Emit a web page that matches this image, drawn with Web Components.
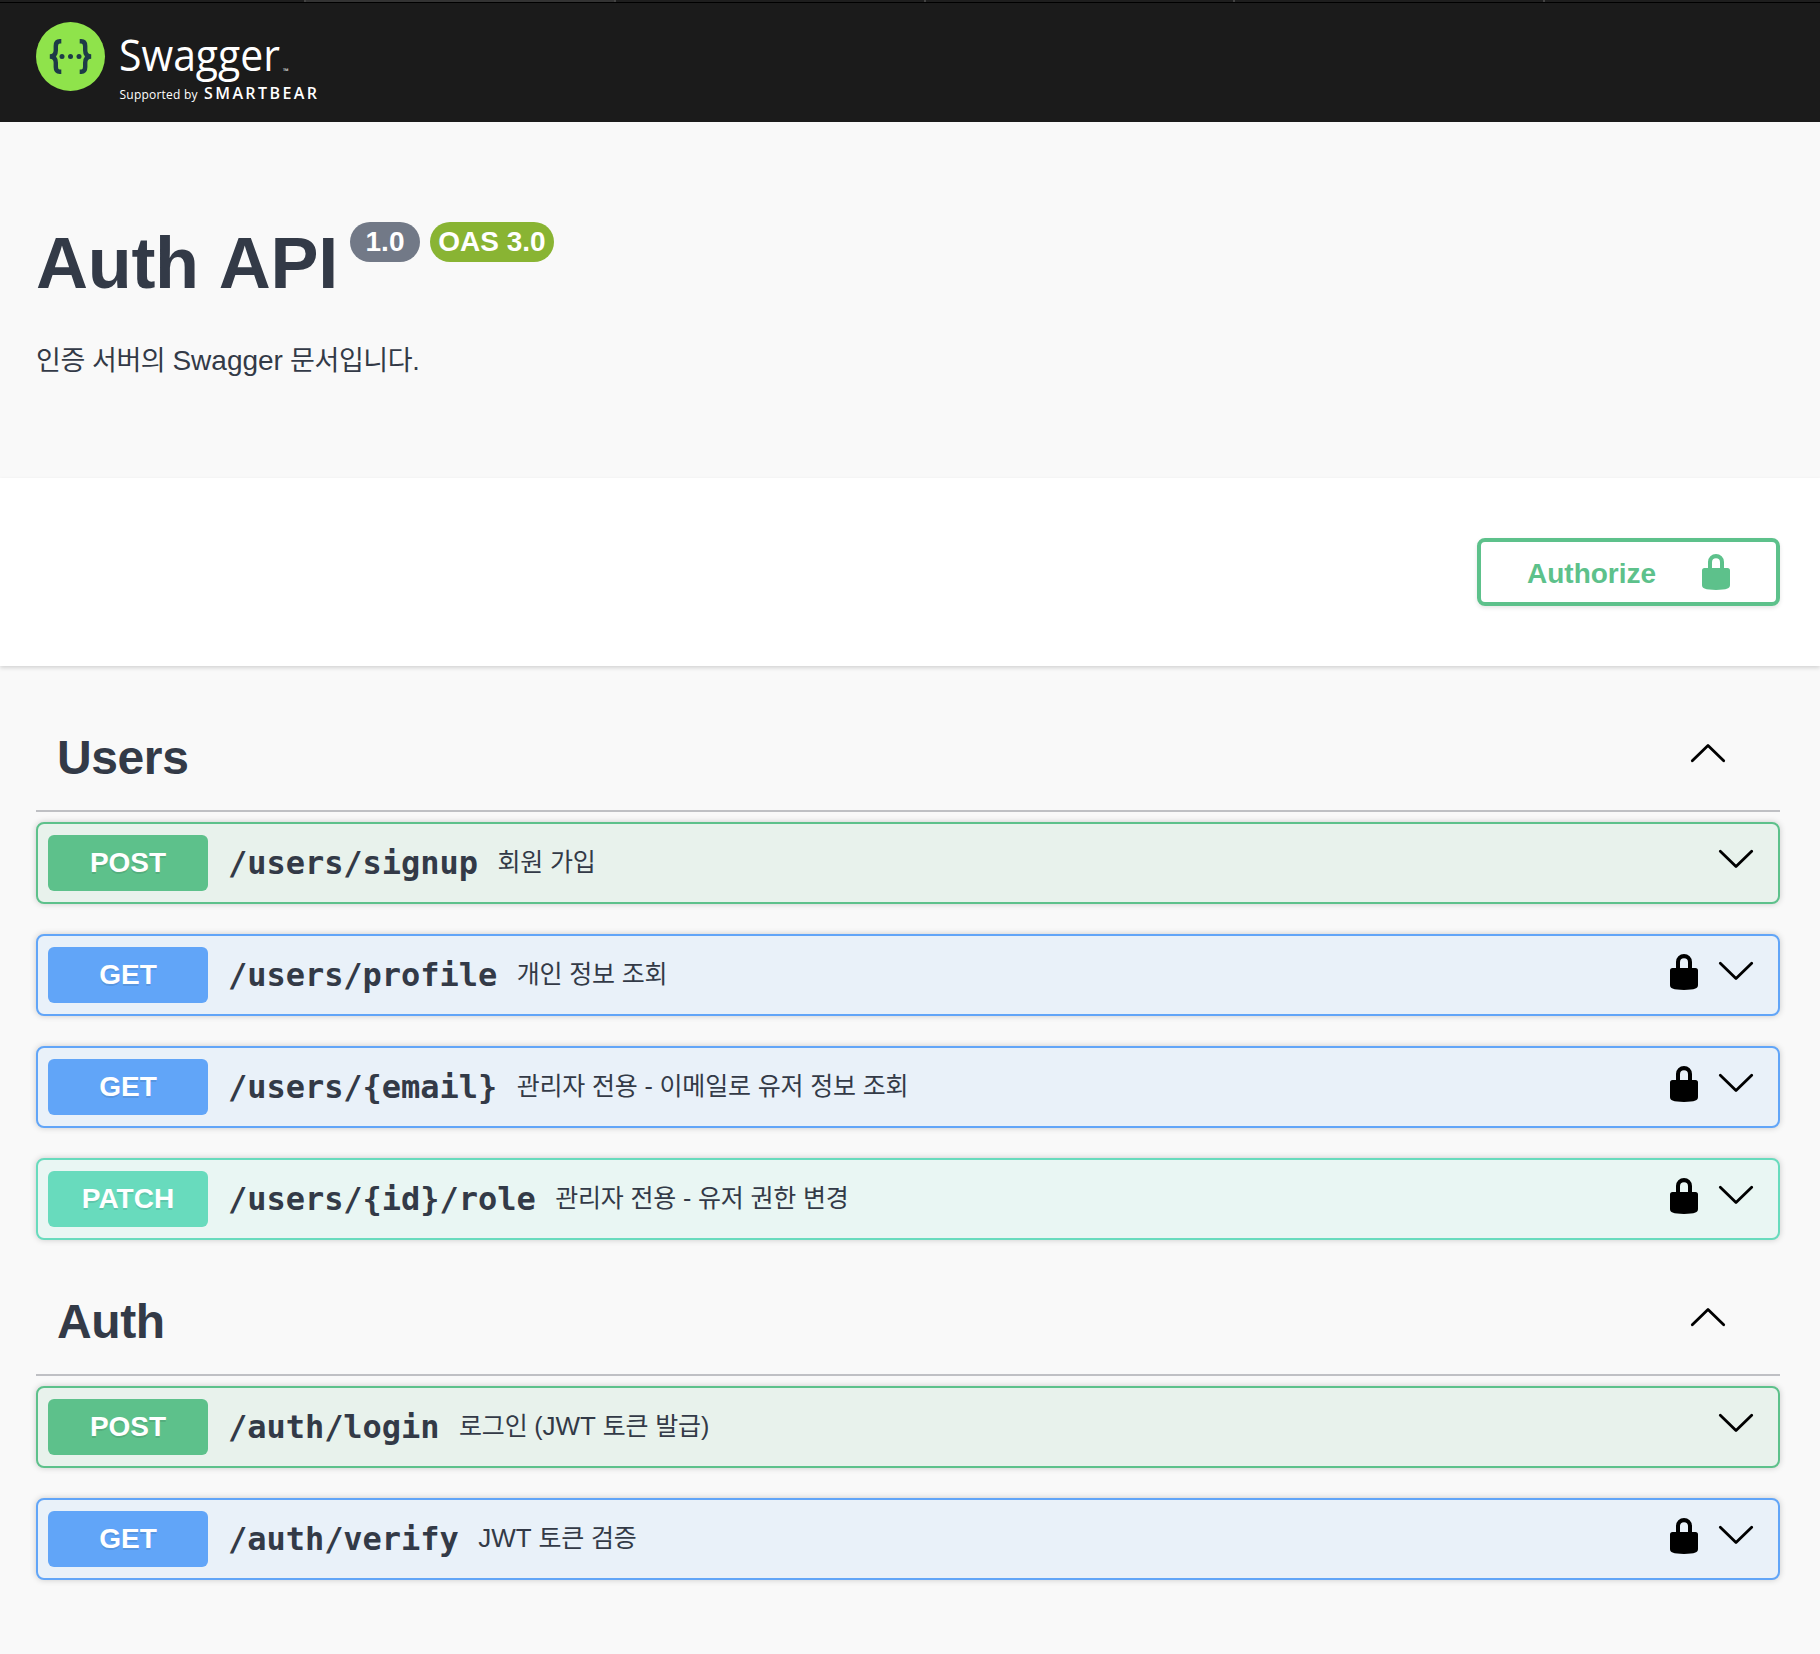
<!DOCTYPE html>
<html lang="ko">
<head>
<meta charset="utf-8">
<title>Auth API</title>
<style>
body{margin:0;background:#f9f9f9;color:#333a47;font-family:"Liberation Sans","Noto Sans CJK KR",sans-serif}
</style>
</head>
<body>
<swagger-app></swagger-app>
<script>
const define = (name, html) => {
  const t = document.createElement('template');
  t.innerHTML = html;
  customElements.define(name, class extends HTMLElement {
    constructor(){
      super();
      this.attachShadow({mode:'open'}).appendChild(t.content.cloneNode(true));
    }
  });
};

define('icon-lock', `<style>:host{display:block;width:28px;height:36px}svg{display:block}</style>
<svg width="28" height="36" viewBox="0 0 28 36" fill="currentColor"><path d="M6 14V8a8 8 0 0 1 16 0v6h3.500a2.500 2.500 0 0 1 2.500 2.500V31c0 1.600-.9 3-2.600 3.600C23 35.600 19 36 14 36S5 35.600 2.600 34.600C.9 34 0 32.600 0 31V16.500A2.500 2.500 0 0 1 2.500 14zM10 14h8V8.200a4 4 0 0 0-8 0z"/></svg>`);

define('icon-chevron', `<style>:host{display:block;width:36px;height:20px;color:#000}:host([up]) svg{transform:scaleY(-1)}svg{display:block}</style>
<svg width="36" height="20" viewBox="0 0 36 20" fill="none" stroke="currentColor" stroke-width="2.800" stroke-linecap="round" stroke-linejoin="round"><path d="M2.300 2.300 18 17.600 33.700 2.300"/></svg>`);

define('top-bar', `<style>
:host{display:block;height:122px;background:#1b1b1b}
.tabs{height:2px;display:flex;background:#1e1e1e;border-bottom:1px solid #000}
.tabs i{box-sizing:border-box;height:2px;flex:0 0 309.500px;border-left:2px solid #444}
.tabs i:first-child{flex-basis:304px;border:0}
.tabs i.on{background:#333;flex-basis:310px}
.tabs i:last-child{flex:1}
svg{display:block;margin:0 0 0 36px}
</style>
<div class="tabs"><i></i><i class="on"></i><i></i><i></i><i></i><i></i></div>
<svg width="300" height="119" viewBox="36 3 300 119" fill="#fff">
<circle cx="70.500" cy="56.500" r="34.500" fill="#8fe34b"/>
<g fill="none" stroke="#1d3b47" stroke-width="4.400">
<path d="M61.300 41.200h-1.500c-3 0-4 1.700-4 4.700v4.300c0 4-1.500 6.300-6 6.300 4.500 0 6 2.300 6 6.300v4.300c0 3 1 4.700 4 4.700h1.500"/>
<path d="M79.700 41.200h1.500c3 0 4 1.700 4 4.700v4.300c0 4 1.500 6.300 6 6.300-4.500 0-6 2.300-6 6.300v4.300c0 3-1 4.700-4 4.700h-1.500"/>
</g>
<g fill="#1d3b47"><circle cx="62" cy="56.500" r="2.500"/><circle cx="70.500" cy="56.500" r="2.500"/><circle cx="79" cy="56.500" r="2.500"/></g>
<g font-family="Open Sans">
<text x="119" y="70.500" font-size="43" textLength="161" lengthAdjust="spacingAndGlyphs">Swagger</text>
<text x="283" y="73.500" font-size="7.500">™</text>
<text x="119.500" y="98.500" font-size="12" textLength="78">Supported by</text>
<text x="204" y="98.500" font-size="16" font-weight="600" textLength="113">SMARTBEAR</text>
</g>
</svg>`);

define('version-badge', `<style>
:host{display:flex;box-sizing:border-box;width:70px;height:40px;border-radius:20px;background:#727987;color:#fff;font-weight:700;font-size:28px;line-height:40px;justify-content:center}
:host([oas]){width:124px;background:#89b433}
</style><span><slot></slot></span>`);

define('api-info', `<style>
:host{display:block;box-sizing:border-box;height:356px;padding:100px 36px 0}
.t{display:flex;align-items:flex-start}
h1{margin:0;font-size:72px;line-height:82px;width:314px;white-space:nowrap;letter-spacing:-.3px;word-spacing:3px}
.b{display:flex;gap:10px}
p{margin:39px 0 0;font-size:27px;line-height:36px;white-space:nowrap;letter-spacing:-.4px}
p span{letter-spacing:0;font-size:28px}
</style>
<div class="t"><h1>Auth API</h1><div class="b"><version-badge>1.0</version-badge><version-badge oas>OAS 3.0</version-badge></div></div>
<p>인증 서버의 <span>Swagger</span> 문서입니다.</p>`);

define('scheme-bar', `<style>
:host{display:flex;box-sizing:border-box;height:188px;padding:60px 40px 0 0;justify-content:flex-end;background:#fff;box-shadow:0 2px 4px rgba(0,0,0,.15)}
button{all:unset;display:flex;box-sizing:border-box;width:303px;height:68px;border:4px solid #5dc18b;border-radius:8px;color:#5dc18b;font-weight:700;font-size:28px;line-height:64px;padding:0 46px;justify-content:space-between;box-shadow:0 2px 4px rgba(0,0,0,.1)}
icon-lock{margin-top:12px}
</style><button><span>Authorize</span><icon-lock></icon-lock></button>`);

define('tag-section', `<style>
:host{display:block;margin:0 40px 0 36px}
header{display:flex;justify-content:space-between;box-sizing:border-box;height:104px;border-bottom:2px solid #bfc0c4;padding:0 54px 0 21px;margin-bottom:10px}
h2{margin:20px 0 0;font-size:48px;line-height:60px;letter-spacing:-.4px}
icon-chevron{margin-top:35px}
.ops{display:flex;flex-direction:column;gap:30px}
</style><header><h2><slot name="title"></slot></h2><icon-chevron up></icon-chevron></header><div class="ops"><slot></slot></div>`);

define('op-block', `<style>
:host{--c:#5dc18b;--bg:#e8f2ec;display:flex;box-sizing:border-box;height:82px;border:2px solid var(--c);border-radius:8px;background:var(--bg);box-shadow:0 0 6px rgba(0,0,0,.19);padding:11px 24px 0 10px}
:host([m=get]){--c:#61a5f8;--bg:#e9f1f9}
:host([m=patch]){--c:#68dbbd;--bg:#e9f6f3}
.m{width:160px;height:56px;border-radius:6px;background:var(--c);color:#fff;font-weight:700;font-size:28px;line-height:56px;text-align:center;text-shadow:0 2px 0 rgba(0,0,0,.1)}
.p{margin-left:20px;font:700 32px/56px "DejaVu Sans Mono",monospace;letter-spacing:-.040px;white-space:nowrap}
.d{margin-left:19.500px;flex:1;font-size:25px;line-height:54px;white-space:nowrap;letter-spacing:-.150px}
::slotted(b){font-weight:400;font-size:26px;letter-spacing:0}
icon-lock{display:none;color:#000;margin:7px 20px 0 0}
:host([locked]) icon-lock{display:block}
icon-chevron{margin-top:14px}
</style><span class="m"><slot name="method"></slot></span><span class="p"><slot name="path"></slot></span><span class="d"><slot></slot></span><icon-lock></icon-lock><icon-chevron></icon-chevron>`);

const op = (m, path, text, locked) => `<op-block m="${m.toLowerCase()}" ${locked ? 'locked' : ''}><span slot="method">${m}</span><span slot="path">${path}</span>${text}</op-block>`;

define('swagger-app', `<style>
:host{display:block;min-height:1654px}
main{display:flex;flex-direction:column;gap:32px;padding-top:42px}
</style>
<top-bar></top-bar><api-info></api-info><scheme-bar></scheme-bar>
<main>
<tag-section><span slot="title">Users</span>${op('POST','/users/signup','회원 가입')}${op('GET','/users/profile','개인 정보 조회',1)}${op('GET','/users/{email}','관리자 전용 - 이메일로 유저 정보 조회',1)}${op('PATCH','/users/{id}/role','관리자 전용 - 유저 권한 변경',1)}</tag-section>
<tag-section><span slot="title">Auth</span>${op('POST','/auth/login','로그인 (<b>JWT</b> 토큰 발급)')}${op('GET','/auth/verify','<b>JWT</b> 토큰 검증',1)}</tag-section>
</main>`);
</script>
</body>
</html>
